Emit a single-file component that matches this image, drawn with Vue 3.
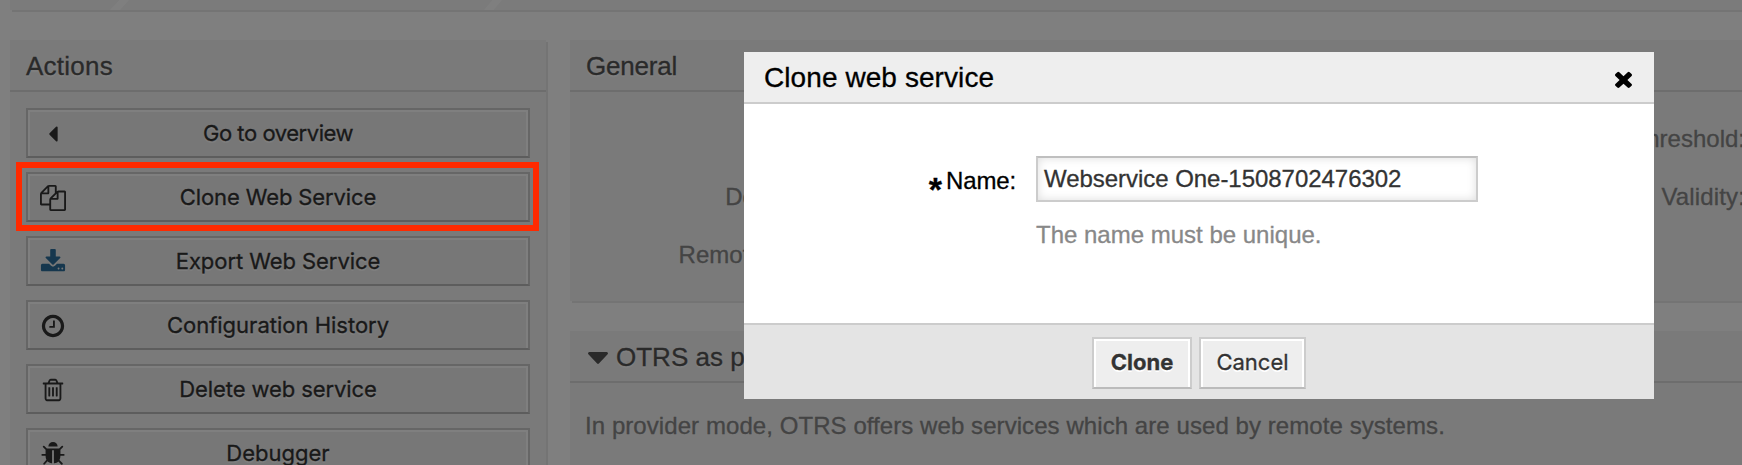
<script setup>
import { ref } from 'vue'

const icons = {
  left: 'M1216 448v896q0 26-19 45t-45 19-45-19l-448-448q-19-19-19-45t19-45l448-448q19-19 45-19t45 19 19 45z',
  copy: 'M1696 384q40 0 68 28t28 68v1216q0 40-28 68t-68 28h-960q-40 0-68-28t-28-68v-288h-544q-40 0-68-28t-28-68v-672q0-40 20-88t48-76l408-408q28-28 76-48t88-20h416q40 0 68 28t28 68v328q68-40 128-40h416zm-544 213l-299 299h299v-299zm-640-384l-299 299h299v-299zm196 647l316-316v-416h-384v416q0 40-28 68t-68 28h-416v640h512v-256q0-40 20-88t48-76zm956 804v-1152h-384v416q0 40-28 68t-68 28h-416v640h896z',
  download: 'M1344 1344q0-26-19-45t-45-19-45 19-19 45 19 45 45 19 45-19 19-45zm256 0q0-26-19-45t-45-19-45 19-19 45 19 45 45 19 45-19 19-45zm128-224v320q0 40-28 68t-68 28h-1472q-40 0-68-28t-28-68v-320q0-40 28-68t68-28h465l135 136q58 56 136 56t136-56l136-136h464q40 0 68 28t28 68zm-325-569q17 41-14 70l-448 448q-18 19-45 19t-45-19l-448-448q-31-29-14-70 17-39 59-39h256v-448q0-26 19-45t45-19h256q26 0 45 19t19 45v448h256q42 0 59 39z',
  clock: 'M1024 544v448q0 14-9 23t-23 9h-320q-14 0-23-9t-9-23v-64q0-14 9-23t23-9h224v-352q0-14 9-23t23-9h64q14 0 23 9t9 23zm416 352q0-148-73-273t-198-198-273-73-273 73-198 198-73 273 73 273 198 198 273 73 273-73 198-198 73-273zm224 0q0 209-103 385.5t-279.5 279.5-385.5 103-385.5-103-279.5-279.5-103-385.5 103-385.5 279.5-279.5 385.5-103 385.5 103 279.5 279.5 103 385.5z',
  trash: 'M704 736v576q0 14-9 23t-23 9h-64q-14 0-23-9t-9-23v-576q0-14 9-23t23-9h64q14 0 23 9t9 23zm256 0v576q0 14-9 23t-23 9h-64q-14 0-23-9t-9-23v-576q0-14 9-23t23-9h64q14 0 23 9t9 23zm256 0v576q0 14-9 23t-23 9h-64q-14 0-23-9t-9-23v-576q0-14 9-23t23-9h64q14 0 23 9t9 23zm128 724v-948h-896v948q0 22 7 40.5t14.5 27 10.5 8.5h832q3 0 10.5-8.5t14.5-27 7-40.5zm-672-1076h448l-48-117q-7-9-17-11h-317q-10 2-17 11zm928 32v64q0 14-9 23t-23 9h-96v948q0 83-47 143.5t-113 60.5h-832q-66 0-113-58.5t-47-141.5v-952h-96q-14 0-23-9t-9-23v-64q0-14 9-23t23-9h309l70-167q15-37 54-63t79-26h320q40 0 79 26t54 63l70 167h309q14 0 23 9t9 23z',
  bug: 'M1696 960q0 26-19 45t-45 19h-224q0 171-67 290l208 209q19 19 19 45t-19 45q-18 19-45 19t-45-19l-198-197q-5 5-15 13t-42 28.5-65 36.5-82 29-97 13v-896h-128v896q-51 0-101.5-13.5t-87-33-66-39-43.5-32.5l-15-14-183 207q-20 21-48 21-24 0-43-16-19-18-20.5-44.5t15.5-46.5l202-227q-58-114-58-274h-224q-26 0-45-19t-19-45 19-45 45-19h224v-294l-173-173q-19-19-19-45t19-45 45-19 45 19l173 173h844l173-173q19-19 45-19t45 19 19 45-19 45l-173 173v294h224q26 0 45 19t19 45zm-480-576h-640q0-133 93.5-226.5t226.5-93.5 226.5 93.5 93.5 226.5z',
}

const actions = [
  { label: 'Go to overview', icon: 'left', cls: 'a-overview' },
  { label: 'Clone Web Service', icon: 'copy', cls: 'a-clone' },
  { label: 'Export Web Service', icon: 'download', cls: 'a-export' },
  { label: 'Configuration History', icon: 'clock', cls: 'a-history' },
  { label: 'Delete web service', icon: 'trash', cls: 'a-delete' },
  { label: 'Debugger', icon: 'bug', cls: 'a-debugger' },
]

const name = ref('Webservice One-1508702476302')
</script>

<template>
  <div class="screen">
    <div class="page">
      <div class="breadcrumb">
        <svg width="1732" height="10" viewBox="10 0 1732 10">
          <path d="M110 10L119.500 0H129L120 10zM484 10L492.500 0H502L493.500 10z" fill="#fff" />
        </svg>
      </div>
      <div class="columns">
        <aside class="panel sidebar">
          <header class="panel-head"><h2><span class="h-actions">Actions</span></h2></header>
          <div class="actions">
            <button v-for="a in actions" :key="a.label" class="action" :class="a.cls">
              <svg class="icon" viewBox="0 0 1792 1792"><path :d="icons[a.icon]" /></svg>
              <span>{{ a.label }}</span>
            </button>
          </div>
        </aside>
        <main class="content">
          <section class="panel general">
            <header class="panel-head"><h2><span class="h-general">General</span></h2></header>
            <div class="fields">
              <div class="labels first">
                <span>Name:</span>
                <span>Description:</span>
                <span>Remote system:</span>
              </div>
              <div class="labels second">
                <span>Debug threshold:</span>
                <span class="l-valid">Validity:</span>
              </div>
            </div>
          </section>
          <section class="panel provider">
            <header class="panel-head">
              <h2>
                <svg class="caret" viewBox="384 640 1024 576" preserveAspectRatio="none"><path d="M1408 704q0 26-19 45l-448 448q-19 19-45 19t-45-19l-448-448q-19-19-19-45t19-45 45-19h896q26 0 45 19t19 45z" /></svg>
                <span>OTRS as provider</span>
              </h2>
            </header>
            <p class="hint">In provider mode, OTRS offers web services which are used by remote systems.</p>
          </section>
        </main>
      </div>
    </div>
    <div class="overlay"></div>
    <div class="marker"></div>
    <div class="dialog">
      <header class="dialog-head">
        <h1>Clone web service</h1>
        <svg class="close" viewBox="302 302 1188 1252" preserveAspectRatio="none"><path d="M1490 1322q0 40-28 68l-136 136q-28 28-68 28t-68-28l-294-294-294 294q-28 28-68 28t-68-28l-136-136q-28-28-28-68t28-68l294-294-294-294q-28-28-28-68t28-68l136-136q28-28 68-28t68 28l294 294 294-294q28-28 68-28t68 28l136 136q28 28 28 68t-28 68l-294 294 294 294q28 28 28 68z" /></svg>
      </header>
      <div class="dialog-body">
        <label class="name-label"><span class="star">*</span><span class="name-text">Name:</span></label>
        <div class="field">
          <div class="input">{{ name }}</div>
          <p class="note">The name must be unique.</p>
        </div>
      </div>
      <footer class="dialog-foot">
        <button class="btn primary">Clone</button>
        <button class="btn cancel">Cancel</button>
      </footer>
    </div>
  </div>
</template>

<style>
body { margin: 0; overflow: hidden; }
</style>

<style scoped>
* { box-sizing: border-box; }
.screen { position: relative; width: 1742px; height: 465px; overflow: hidden; font-family: "Liberation Sans", Arial, sans-serif; -webkit-text-stroke: .3px currentColor; }
.page { height: 465px; background: #fff; overflow: hidden; }
.breadcrumb { height: 10px; margin-left: 10px; background: #f6f6f6; box-shadow: 2px 2px 0 #e9e9e9; }
.breadcrumb svg { display: block; }
.columns { display: flex; gap: 24px; margin-top: 30px; padding-left: 10px; }
h1, h2, p { margin: 0; font-weight: normal; }
.panel { background: #f5f5f5; box-shadow: 2px 2px 0 #e9e9e9; }
.sidebar { width: 536px; height: 480px; }
.content { flex: 1; display: flex; flex-direction: column; gap: 30px; }
.panel-head { height: 52px; border-bottom: 2px solid #dadada; padding-left: 16px; }
.panel-head h2 { display: flex; align-items: center; height: 52px; color: #555; font-size: 26px; line-height: 52px; text-shadow: 0 2px 1px #fff; }
.h-actions { letter-spacing: .25px; }
.h-general { letter-spacing: -.2px; }
.actions { display: flex; flex-direction: column; gap: 14px; padding: 16px; }
.action { position: relative; height: 50px; margin: 0; padding: 0; border: 2px solid #ccc; border-bottom-color: #bbb; background: #eee; box-shadow: inset 0 2px #fff, inset 2px 0 #fff, inset -2px 0 #fff; color: #333; font: 22px/46px Inter, sans-serif; text-shadow: 0 2px 1px #fff; text-align: center; }
.a-overview { letter-spacing: -.45px; }
.a-clone, .a-delete { letter-spacing: -.1px; }
.a-export { letter-spacing: -.06px; }
.icon { position: absolute; left: 12px; top: 11px; width: 26px; height: 26px; fill: #333; }
.a-export .icon { fill: #2c6f9c; }
.general { height: 261px; }
.provider { height: 200px; }
.fields { display: flex; justify-content: space-between; padding: 18px 0 0; }
.labels { display: flex; flex-direction: column; align-items: flex-end; color: #888; font-size: 24px; line-height: 58px; white-space: nowrap; }
.first { width: 282px; }
.second { margin-right: -3px; }
.l-valid { letter-spacing: .15px; }
.caret { width: 20px; height: 12px; margin: 2px 8px 0 2px; fill: #555; }
.hint { padding: 14px 0 0 15px; color: #888; font-size: 24px; line-height: 57px; letter-spacing: .07px; white-space: nowrap; }
.overlay { position: absolute; inset: 0; background: rgba(0, 0, 0, .5); }
.marker { position: absolute; left: 16px; top: 162px; width: 523px; height: 69px; border: 6px solid #ff2a00; }
.dialog { position: absolute; left: 744px; top: 52px; width: 910px; height: 347px; background: #fff; display: flex; flex-direction: column; color: #000; }
.dialog-head { height: 52px; background: #eee; border-bottom: 2px solid #ccc; display: flex; justify-content: space-between; padding: 0 22px 0 20px; }
.dialog-head h1 { font-size: 28px; line-height: 51px; letter-spacing: .08px; }
.close { width: 17px; height: 17px; margin-top: 19px; }
.dialog-body { flex: 1; display: flex; padding-top: 52px; }
.name-label { width: 272px; height: 46px; display: flex; justify-content: flex-end; font-size: 24px; line-height: 49px; }
.name-text { letter-spacing: -.15px; }
.star { font-size: 34px; font-weight: bold; line-height: 67px; margin-right: 4px; }
.field { margin-left: 20px; }
.input { width: 442px; height: 46px; border: 2px solid #ccc; border-top-color: #bfbfbf; padding-left: 6px; color: #333; font-size: 24px; line-height: 41px; letter-spacing: -.04px; box-shadow: inset 0 0 10px #ddd; }
.note { color: #888; font-size: 24px; line-height: 29px; margin-top: 18px; }
.dialog-foot { height: 76px; background: #e4e4e4; border-top: 2px solid #ccc; display: flex; justify-content: center; gap: 7px; padding-top: 12px; }
.btn { height: 52px; padding: 0 0 2px; border: 2px solid #ccc; border-bottom-color: #bbb; background: #eee; box-shadow: inset 0 2px #fff, inset 2px 0 #fff, inset -2px 0 #fff; color: #333; font: 22px/46px Inter, sans-serif; text-shadow: 0 2px 0 #fff; }
.primary { width: 100px; font-weight: bold; }
.cancel { width: 107px; }
</style>
